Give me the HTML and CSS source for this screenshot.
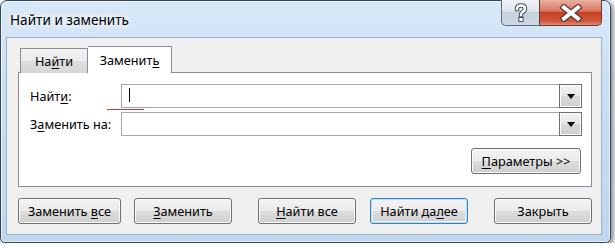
FILE: index.html
```html
<!DOCTYPE html>
<html lang="ru">
<head>
  <meta charset="UTF-8">
  <title>Найти и заменить</title>
  <link rel="stylesheet" href="styles.css">
</head>
<body>
  <div class="window">
    <div class="titlebar">
      <div class="title">Найти и заменить</div>
      <div class="caption-buttons">
        <div class="cap-btn help">
          <svg width="14" height="20" viewBox="0 0 14 20">
            <path d="M3 6 Q3 2.5 7 2.5 Q11 2.5 11 5.5 Q11 8 8.2 9.2 Q7 9.8 7 12" fill="none" stroke="#4a4f55" stroke-width="4.4" stroke-linecap="square"/>
            <rect x="4.4" y="14" width="5.2" height="5" fill="#4a4f55"/>
            <path d="M3 6 Q3 2.5 7 2.5 Q11 2.5 11 5.5 Q11 8 8.2 9.2 Q7 9.8 7 12" fill="none" stroke="#fff" stroke-width="2.4" stroke-linecap="square"/>
            <rect x="5.4" y="15" width="3.2" height="3" fill="#fff"/>
          </svg>
        </div>
        <div class="cap-btn close">
          <svg width="24" height="18" viewBox="0 0 24 18">
            <path d="M5 3.5 L19 14.5 M19 3.5 L5 14.5" stroke="#5a3a35" stroke-width="6.4" stroke-linecap="square"/>
            <path d="M5 3.5 L19 14.5 M19 3.5 L5 14.5" stroke="#fff" stroke-width="4" stroke-linecap="square"/>
          </svg>
        </div>
      </div>
    </div>

    <div class="client">
      <div class="tabs">
        <div class="tab">На<u>й</u>ти</div>
        <div class="tab active">Заменит<u>ь</u></div>
      </div>

      <div class="panel">
        <div class="field-row">
          <label>Найт<u>и</u>:</label>
          <div class="combo">
            <span class="caret"></span>
            <span class="drop"><i></i></span>
          </div>
          <span class="squiggle"></span>
        </div>
        <div class="field-row">
          <label>З<u>а</u>менить на:</label>
          <div class="combo">
            <span class="drop"><i></i></span>
          </div>
        </div>
        <div class="options-row">
          <button class="btn btn-params"><u>П</u>араметры &gt;&gt;</button>
        </div>
      </div>

      <div class="actions">
        <div class="group">
          <button class="btn btn-wide">Заменить <u>в</u>се</button>
          <button class="btn"><u>З</u>аменить</button>
        </div>
        <div class="group group-find">
          <button class="btn"><u>Н</u>айти все</button>
          <button class="btn focused">Найти да<u>л</u>ее</button>
        </div>
        <button class="btn btn-close">Закрыть</button>
      </div>
    </div>
  </div>
</body>
</html>
```

FILE: styles.css
```css
* {
  box-sizing: border-box;
  margin: 0;
  padding: 0;
}

body {
  background: #ffffff;
  font-family: 'Noto Sans', 'Liberation Sans', sans-serif;
  font-size: 12.7px;
  color: #000;
}

u {
  text-decoration: underline;
  text-underline-offset: 2px;
}

.window {
  width: 611px;
  height: 243px;
  border: 1px solid #34465a;
  border-radius: 7px 7px 5px 5px;
  padding: 0 8px 7px 5px;
  background: linear-gradient(180deg, #d7e8f8 0%, #c9def3 40%, #bfd6ee 100%);
  box-shadow: inset 0 0 0 1px rgba(255, 255, 255, 0.6), 2px 2px 6px rgba(0, 0, 0, 0.55);
}

.titlebar {
  height: 36px;
  display: flex;
  align-items: flex-start;
}

.title {
  padding: 10px 0 0 4px;
  font-size: 13.6px;
  line-height: 18px;
  text-shadow: 0 0 6px #fff, 0 0 10px #fff, 0 0 14px #fff;
}

.caption-buttons {
  margin-left: auto;
  margin-top: -1px;
  display: flex;
}

.cap-btn {
  height: 26px;
  display: flex;
  align-items: center;
  justify-content: center;
  border: 1px solid #5d6c7c;
  border-top: none;
}

.help {
  width: 38px;
  border-right: none;
  border-radius: 0 0 0 5px;
  background: linear-gradient(180deg, #eef2f6 0%, #dde5ed 45%, #c5d1dc 50%, #cdd8e2 100%);
}

.close {
  width: 63px;
  border-radius: 0 0 5px 0;
  border-color: #6a3a32;
  background: linear-gradient(180deg, #eab0a4 0%, #d8735e 45%, #c6401f 50%, #d05a3e 85%, #e08a70 100%);
}

.client {
  height: 198px;
  background: #f0f0f0;
  border: 1px solid #9fb1c4;
  padding: 8px 9px 0 11px;
}

.tabs {
  display: flex;
  align-items: flex-end;
  height: 27px;
  padding-left: 2px;
  margin-bottom: -1px;
  position: relative;
  z-index: 1;
}

.tab {
  width: 68px;
  height: 25px;
  border: 1px solid #898c95;
  border-bottom: none;
  background: linear-gradient(180deg, #f3f3f3 0%, #ebebeb 50%, #dedede 51%, #d6d6d6 100%);
  text-align: center;
  line-height: 24px;
}

.tab.active {
  width: 84px;
  height: 27px;
  border-left: none;
  background: #fff;
  line-height: 26px;
}

.panel {
  height: 115px;
  background: #fff;
  border: 1px solid #898c95;
  padding: 11px 9px 0 11px;
}

.field-row {
  display: flex;
  align-items: center;
  height: 24px;
  margin-bottom: 4px;
  position: relative;
}

.field-row label {
  width: 91px;
}

.combo {
  flex: 1;
  height: 24px;
  border: 1px solid #a5a7ad;
  display: flex;
  align-items: center;
  justify-content: flex-end;
  position: relative;
  background: #fff;
}

.caret {
  position: absolute;
  left: 7px;
  top: 3px;
  width: 1px;
  height: 14px;
  background: #000;
}

.drop {
  width: 23px;
  height: 24px;
  margin-right: -1px;
  border: 1px solid #6f6f6f;
  background: linear-gradient(180deg, #f4f4f4 0%, #e6e6e6 50%, #d8d8d8 51%, #d0d0d0 100%);
  box-shadow: inset 0 0 0 1px #fbfbfb;
  display: flex;
  align-items: center;
  justify-content: center;
}

.drop i {
  width: 0;
  height: 0;
  border-left: 4px solid transparent;
  border-right: 4px solid transparent;
  border-top: 5px solid #000;
  margin-top: 1px;
}

.squiggle {
  position: absolute;
  left: 77px;
  top: 25px;
  width: 37px;
  height: 1px;
  background: #d83030;
}

.options-row {
  display: flex;
  justify-content: flex-end;
  padding-top: 8px;
  padding-right: 1px;
}

.btn {
  font: inherit;
  color: #000;
  width: 98px;
  height: 26px;
  border: 1px solid #707070;
  border-radius: 3px;
  background: linear-gradient(180deg, #f3f3f3 0%, #ebebeb 48%, #dddddd 52%, #cfcfcf 100%);
  box-shadow: inset 0 0 0 1px #fafafa;
  text-align: center;
}

.btn-params {
  width: 110px;
}

.btn-wide {
  width: 103px;
}

.btn-close {
  width: 99px;
}

.btn.focused {
  border-color: #3c7fb1;
  box-shadow: inset 0 0 0 1px #b6e0f6, inset 0 0 0 2px #e6f4fc;
}

.actions {
  display: flex;
  gap: 26px;
  margin-top: 11px;
}

.group {
  display: flex;
  gap: 13px;
}

.group-find {
  gap: 14px;
}
```
